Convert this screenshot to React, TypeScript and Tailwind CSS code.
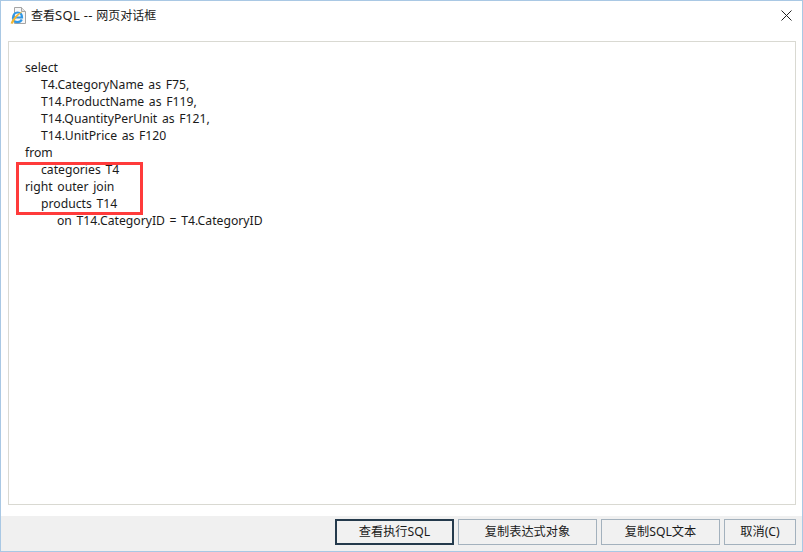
const sqlLines: { text: string; indent: string }[] = [
  { text: 'select', indent: '' },
  { text: 'T4.CategoryName as F75,', indent: 'pl-4' },
  { text: 'T14.ProductName as F119,', indent: 'pl-4' },
  { text: 'T14.QuantityPerUnit as F121,', indent: 'pl-4' },
  { text: 'T14.UnitPrice as F120', indent: 'pl-4' },
  { text: 'from', indent: '' },
  { text: 'categories T4', indent: 'pl-4' },
  { text: 'right outer join', indent: '' },
  { text: 'products T14', indent: 'pl-4' },
  { text: 'on T14.CategoryID = T4.CategoryID', indent: 'pl-8' },
];

const IeIcon = () => (
  <svg width="16" height="18" viewBox="0 0 16 18" className="shrink-0">
    <path d="M4.5 0.5H11.5L15.5 4.5V16.5H4.5Z" fill="#f7f7f7" stroke="#a5a5a5" />
    <path d="M11.5 0.5V4.5H15.5" fill="#e4e4e4" stroke="#a5a5a5" />
    <path d="M3 10.5H12C12 7.5 10.2 5.5 7.5 5.5C5 5.5 3.2 7.8 3 10.5ZM3 10.5C3 13.5 5.2 15.2 7.6 15.2C9.5 15.2 11 14.2 11.8 12.6" fill="none" stroke="#2f97e6" strokeWidth="2.2" />
    <path d="M0.6 16.6C1.6 12.5 6.5 6.5 13 4.2C9 7.2 4.5 12.5 3 16.8Z" fill="#f2b632" />
  </svg>
);

const DialogButton = ({ label, width, active }: { label: string; width: string; active?: boolean }) => (
  <button
    className={`h-[26px] bg-[#f1f1f1] text-[12.2px] text-[#1a1a1a] ${width} ${active ? 'border-2 border-[#243a4c]' : 'border border-[#a3b1bd]'}`}
  >
    {label}
  </button>
);

export default function App() {
  return (
    <div
      className="flex h-[552px] w-[803px] flex-col overflow-hidden border border-[#a9c8e4] bg-white text-[#1a1a1a]"
      style={{ fontFamily: '"Noto Sans", "Noto Sans CJK SC", sans-serif' }}
    >
      {/* title bar */}
      <div className="flex h-[29px] shrink-0 items-center pl-[9px] pr-[9px]">
        <IeIcon />
        <span className="ml-[5px] text-[12px]">
          查看<span className="text-[13px] tracking-[0.3px]">SQL -- </span>网页对话框
        </span>
        <svg width="11" height="11" viewBox="0 0 11 11" className="ml-auto mr-[1px]">
          <path d="M0.5 0.5L10.5 10.5M10.5 0.5L0.5 10.5" stroke="#222" strokeWidth="1" />
        </svg>
      </div>

      {/* sql panel */}
      <div className="px-[7px]">
        <div className="relative mt-[11px] mr-[-1px] h-[464px] border border-[#d9d9d2] bg-white pl-4 pt-[17px] text-[12.2px] leading-[17px] [word-spacing:1.5px]">
          {sqlLines.map((line) => (
            <div key={line.text} className={line.indent}>
              {line.text}
            </div>
          ))}
          <div className="absolute left-[7px] top-[120px] h-[53px] w-[127px] border-[3px] border-[#ff3b3b]" />
        </div>
      </div>

      {/* button row */}
      <div className="mt-[11px] flex flex-1 items-start justify-end gap-1 bg-[#f0f0f0] pr-[6px] pt-[3px]">
        <DialogButton label="查看执行SQL" width="w-[119px]" active />
        <DialogButton label="复制表达式对象" width="w-[139px]" />
        <DialogButton label="复制SQL文本" width="w-[119px]" />
        <DialogButton label="取消(C)" width="w-[72px]" />
      </div>
    </div>
  );
}
